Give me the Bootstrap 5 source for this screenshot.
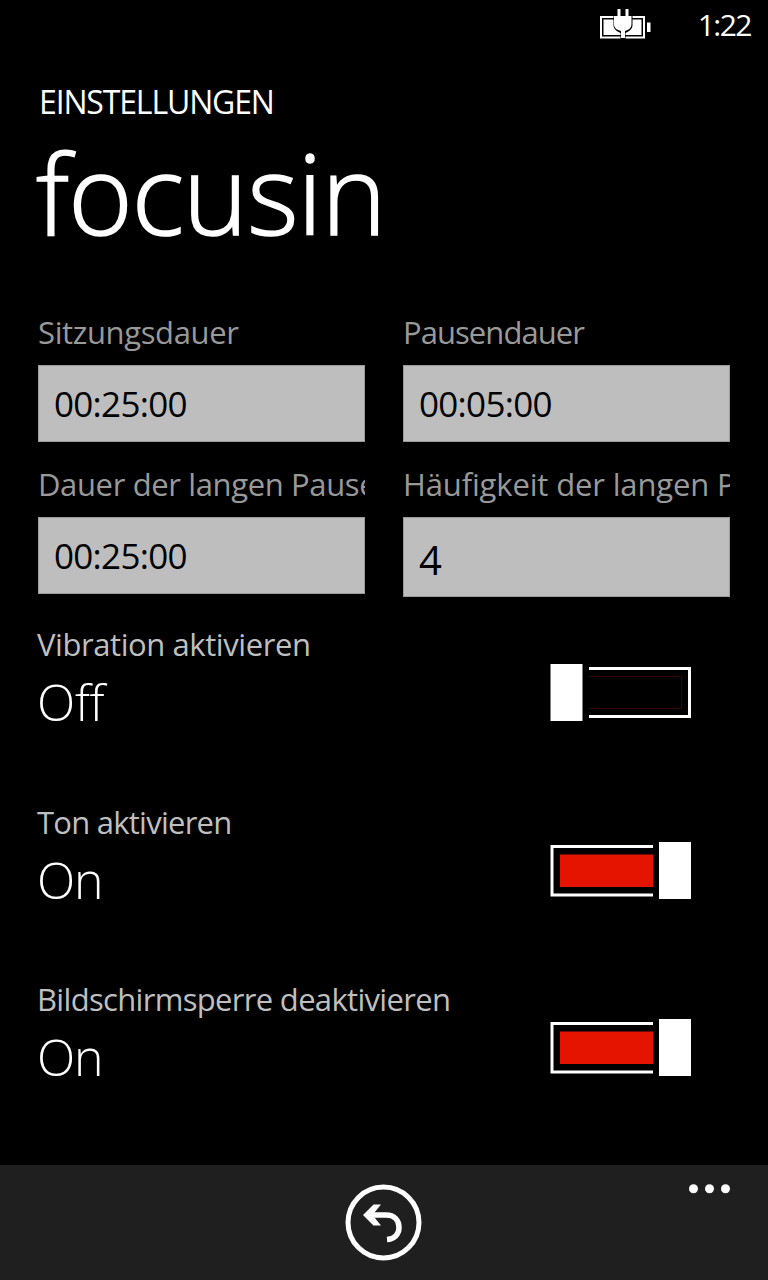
<!DOCTYPE html>
<html lang="de">
<head>
<meta charset="utf-8">
<meta name="viewport" content="width=device-width, initial-scale=1">
<title>focusin – Einstellungen</title>
<link href="https://cdn.jsdelivr.net/npm/bootstrap@5.3.0/dist/css/bootstrap.min.css" rel="stylesheet">
<style>
body{background:#000;color:#fff;font-family:"Open Sans","Noto Sans",sans-serif;width:768px;height:1280px;overflow:hidden;line-height:40px;white-space:nowrap}
svg{display:block}
.status{height:48px;line-height:49px;font-size:30px;letter-spacing:-1.5px;padding-right:17px}
.battery{margin:7px 45px 0 0}
.page-head{padding:34px 38px 0;height:265px}
.eyebrow{font-size:32px;letter-spacing:-1.15px;margin-left:1px}
.title{font-size:110px;line-height:120px;font-weight:300;margin:10px 0 0 -2px;letter-spacing:-.9px;-webkit-text-stroke:1.6px #fff}
.fields{padding:0 38px;display:grid;grid-template-columns:327px 327px;column-gap:38px;height:310px;align-content:start}
.field{height:152px}
.field label{display:block;overflow:hidden;font-size:31px;color:#999;margin:-1px 0 13px;letter-spacing:-.37px}
.field .pause{letter-spacing:-.95px}
.field .often{letter-spacing:-.15px}
.value{width:327px;height:77px;border:1px solid #999;border-radius:0;background:#bebebe;color:#000;font-size:35px;padding:0 15px;line-height:76px;letter-spacing:-.7px}
.value.tall{height:80px;font-size:40px;line-height:84px}
.setting{height:177.7px;padding:0 77px 0 37px}
.name{font-size:31px;color:#bfbfbf;margin-top:1px}
.n1{letter-spacing:-.42px}
.n2{letter-spacing:-.75px}
.n3{letter-spacing:-.68px}
.state{font-size:50px;line-height:60px;font-weight:300;margin-top:8px;letter-spacing:-1.2px}
.n1+.state{letter-spacing:-.3px}
.switch{margin-top:40px}
.appbar{height:115px;background:#1f1f1f;padding-top:19px}
.more{top:19px;right:37px}
</style>
</head>
<body class="d-flex flex-column">
<div class="status d-flex justify-content-end flex-shrink-0">
<svg class="battery" width="54" height="34" viewBox="0 0 54 34"><path d="M2 10h43v20.500H2z" fill="none" stroke="#fff" stroke-width="2"/><path d="M4.500 12.500h38v15.500h-38z" fill="#fff"/><path d="M48 15.500h3.500v9.500H48z" fill="#fff"/><path d="M15.500 8h2V1h13v7h3v10c0 4-3 6-7 8v7h-5v-7c-4-2-7-4-7-8v-10z" fill="#000"/><path d="M18.500 2h3v7h5V2h3v7h3v8c0 4-3 6-6.500 7v7h-4v-7c-4-1-7-3-7-7V9h3.500z" fill="#fff"/></svg>
<span>1:22</span>
</div>
<header class="page-head flex-shrink-0"><div class="eyebrow">EINSTELLUNGEN</div><h1 class="title">focusin</h1></header>
<main class="flex-grow-1">
<section class="fields">
<div class="field"><label>Sitzungsdauer</label><div class="value form-control">00:25:00</div></div>
<div class="field"><label class="pause">Pausendauer</label><div class="value form-control">00:05:00</div></div>
<div class="field"><label>Dauer der langen Pause</label><div class="value form-control">00:25:00</div></div>
<div class="field"><label class="often">Häufigkeit der langen Pause</label><div class="value tall form-control">4</div></div>
</section>
<section>
<div class="setting d-flex justify-content-between align-items-start"><div><div class="name n1">Vibration aktivieren</div><div class="state">Off</div></div>
<svg class="switch" width="141" height="59" viewBox="0 0 141 59"><path d="M39 5.500h100.500v48H39" fill="none" stroke="#fff" stroke-width="3"/><path d="M39 13.500h92.500v32H39" fill="none" stroke="#350500"/><path d="M.5 1H32.500v57H.5z" fill="#fff"/></svg></div>
<div class="setting d-flex justify-content-between align-items-start"><div><div class="name n2">Ton aktivieren</div><div class="state">On</div></div>
<svg class="switch" width="141" height="59" viewBox="0 0 141 59"><path d="M103 5.500H2v48.500h101" fill="none" stroke="#fff" stroke-width="3"/><path d="M10 13.500h93v32.500H10z" fill="#e51400"/><path d="M109 1h32v57h-32z" fill="#fff"/></svg></div>
<div class="setting d-flex justify-content-between align-items-start"><div><div class="name n3">Bildschirmsperre deaktivieren</div><div class="state">On</div></div>
<svg class="switch" width="141" height="59" viewBox="0 0 141 59"><path d="M103 5.500H2v48.500h101" fill="none" stroke="#fff" stroke-width="3"/><path d="M10 13.500h93v32.500H10z" fill="#e51400"/><path d="M109 1h32v57h-32z" fill="#fff"/></svg></div>
</section>
</main>
<footer class="appbar position-relative d-flex justify-content-center flex-shrink-0">
<svg width="78" height="78" viewBox="0 0 78 78"><circle cx="38.500" cy="38.500" r="35.500" fill="none" stroke="#fff" stroke-width="5"/><path d="M24 31h17c8.500 0 13 5.500 13 12.500 0 7-5 11.500-12 12" fill="none" stroke="#fff" stroke-width="5.500"/><path d="M18 31l10.500-10.500H36L27.500 31 36 41.500h-7.500z" fill="#fff"/></svg>
<svg class="more position-absolute" width="42" height="10" viewBox="0 0 42 10" fill="#fff"><circle cx="4.500" cy="4.700" r="4.500"/><circle cx="20.500" cy="4.700" r="4.500"/><circle cx="36.500" cy="4.700" r="4.500"/></svg>
</footer>
<script src="https://cdn.jsdelivr.net/npm/bootstrap@5.3.0/dist/js/bootstrap.bundle.min.js"></script>
</body></html>
